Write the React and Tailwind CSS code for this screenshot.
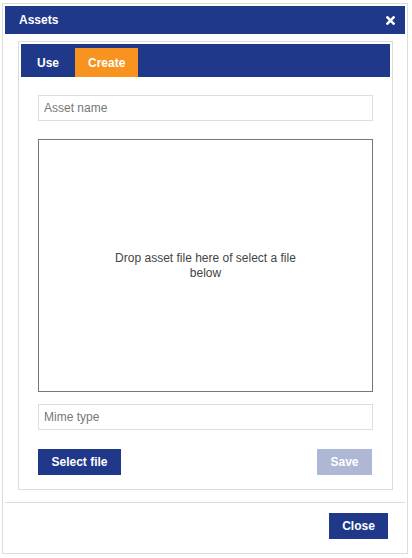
import React, { useState } from "react";

const font = { fontFamily: '"Liberation Sans", Arial, sans-serif' };

function CloseIcon() {
    return (
        <svg width="9" height="9" viewBox="0 0 10 10" aria-hidden="true">
            <path d="M1.6 1.6 8.4 8.4M8.4 1.6 1.6 8.4" stroke="#fff" strokeWidth="2.8" strokeLinecap="square" />
        </svg>
    );
}

export default function App() {
    const [tab, setTab] = useState("create");
    const [assetName, setAssetName] = useState("");
    const [mimeType, setMimeType] = useState("");

    const tabClass = (active) =>
        `h-[29px] flex items-center text-[12px] font-bold text-white ${active ? "bg-[#f7931e]" : "bg-transparent"}`;

    return (
        <div className="w-[412px] h-[558px] bg-white" style={font}>
            <div className="ml-[2px] mt-[3px] w-[406px] h-[551px] border border-[#dcdcdc] p-[2px] flex flex-col">
                {/* header */}
                <div className="h-[28px] bg-[#1f388a] flex items-center justify-between pl-[14px] pr-[9px] shrink-0">
                    <span className="text-[12px] font-bold text-white">Assets</span>
                    <button className="flex items-center justify-center w-[12px] h-[12px]">
                        <CloseIcon />
                    </button>
                </div>

                {/* body */}
                <div className="pt-[7px] pl-[13px] pr-[12px] pb-[12px]">
                    <div className="border border-[#dcdcdc] p-[2px]">
                        <div className="h-[33px] bg-[#1f388a] flex items-end">
                            <button onClick={() => setTab("use")} className={`${tabClass(tab === "use")} px-[16px]`}>Use</button>
                            <button onClick={() => setTab("create")} className={`${tabClass(tab === "create")} px-[13px]`}>Create</button>
                        </div>

                        <div className="px-[17px] pt-[18px] pb-[12px] flex flex-col">
                            <input
                                type="text"
                                value={assetName}
                                onChange={(e) => setAssetName(e.target.value)}
                                placeholder="Asset name"
                                className="h-[26px] w-full border border-[#dedede] px-[5px] text-[12px] text-[#333] placeholder:text-[#777] outline-none"
                            />

                            <div className="mt-[18px] h-[253px] border border-[#777] flex items-center justify-center">
                                <p className="w-[190px] text-center text-[12px] leading-[15px] text-[#444]">
                                    Drop asset file here of select a file below
                                </p>
                            </div>

                            <input
                                type="text"
                                value={mimeType}
                                onChange={(e) => setMimeType(e.target.value)}
                                placeholder="Mime type"
                                className="mt-[12px] h-[26px] w-full border border-[#dedede] px-[5px] text-[12px] text-[#333] placeholder:text-[#777] outline-none"
                            />

                            <div className="mt-[19px] flex justify-between pr-[1px]">
                                <button className="h-[26px] w-[83px] bg-[#1f388a] text-white text-[12px] font-bold">Select file</button>
                                <button disabled className="h-[26px] w-[55px] bg-[#aeb8d5] text-white text-[12px] font-bold cursor-not-allowed">Save</button>
                            </div>
                        </div>
                    </div>
                </div>

                {/* footer */}
                <div className="border-t border-[#dcdcdc] flex justify-end pt-[10px] pr-[17px]">
                    <button className="h-[26px] w-[59px] bg-[#1f388a] text-white text-[12px] font-bold">Close</button>
                </div>
            </div>
        </div>
    );
}
